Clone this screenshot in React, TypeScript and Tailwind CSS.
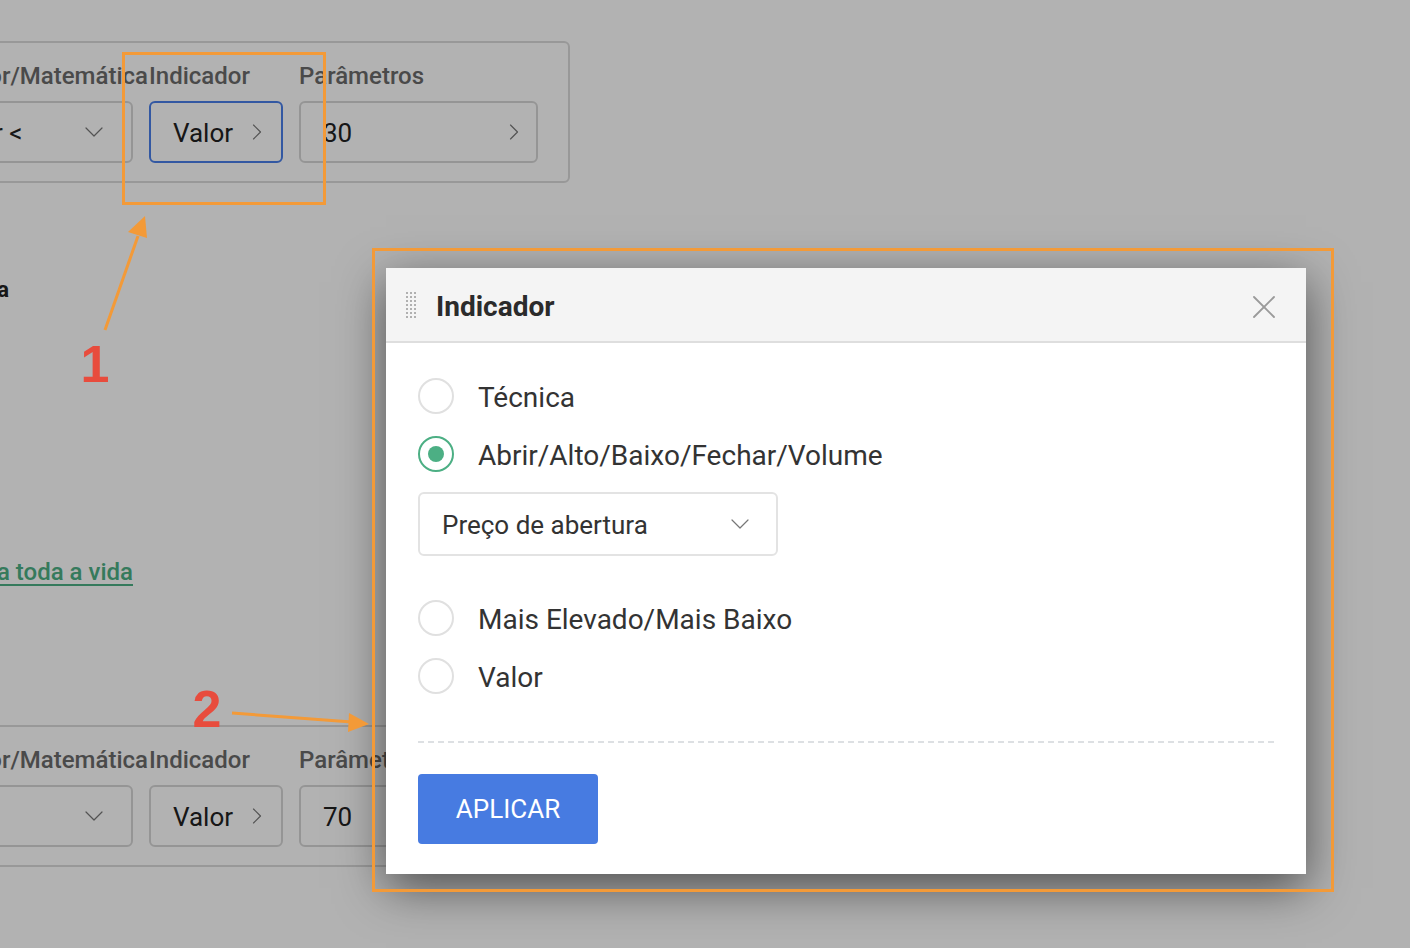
import { ChevronDown, ChevronRight, X } from "lucide-react";

type FieldProps = {
  text?: string;
  icon: "down" | "right";
  active?: boolean;
  pr: string;
};

function Field({ text, icon, active, pr }: FieldProps) {
  return (
    <div
      className={`h-[62px] rounded-md border-2 flex items-center justify-between pl-[22px] ${pr} ${
        active ? "border-[#4a7fe8]" : "border-[#d6d6d6]"
      }`}
    >
      <span className="text-[26px] text-[#222] whitespace-nowrap pt-[2px]">{text}</span>
      {icon === "down" ? (
        <ChevronDown size={32} strokeWidth={0.9} className="text-[#777]" />
      ) : (
        <ChevronRight size={28} strokeWidth={1} className="text-[#777]" />
      )}
    </div>
  );
}

function RulePanel({ op, param, active }: { op: string; param: string; active?: boolean }) {
  const label = "text-[24px] leading-[28px] font-medium text-[#6b6b6b] whitespace-nowrap";
  return (
    <div className="-ml-[114px] w-[684px] rounded-md border-2 border-[#dadada] pl-[24px] pr-[30px] pt-[19px] pb-[18px] flex gap-4">
      <div className="w-[221px] shrink-0">
        <div className="flex justify-end -mr-[15px] mb-[11px]">
          <span className={label}>Operador/Matemática</span>
        </div>
        <Field text={op} icon="down" pr="pr-[21px]" />
      </div>
      <div className="w-[134px] shrink-0">
        <div className={`${label} mb-[11px]`}>Indicador</div>
        <Field text="Valor" icon="right" active={active} pr="pr-[10px]" />
      </div>
      <div className="w-[239px] shrink-0">
        <div className={`${label} mb-[11px]`}>Parâmetros</div>
        <Field text={param} icon="right" pr="pr-[8px]" />
      </div>
    </div>
  );
}

function Radio({ label, checked }: { label: string; checked?: boolean }) {
  return (
    <div className="flex items-center gap-[24px] h-[36px]">
      <div
        className={`w-[36px] h-[36px] rounded-full border-2 flex items-center justify-center ${
          checked ? "border-[#4caf84]" : "border-[#e0e0e0]"
        }`}
      >
        {checked && <div className="w-[16px] h-[16px] rounded-full bg-[#4caf84]" />}
      </div>
      <span className="text-[28px] text-[#333] whitespace-nowrap pt-[3px]">{label}</span>
    </div>
  );
}

function DragHandle() {
  const dots = [];
  for (let r = 0; r < 7; r++) {
    for (let c = 0; c < 3; c++) {
      dots.push(<rect key={`${r}-${c}`} x={c * 4} y={r * 4} width="2" height="2" fill="#b0b0b0" />);
    }
  }
  return (
    <svg width="10" height="26" viewBox="0 0 10 26">
      {dots}
    </svg>
  );
}

export default function App() {
  return (
    <div
      className="relative w-[1410px] h-[948px] overflow-hidden bg-white"
      style={{ fontFamily: "Roboto, 'Liberation Sans', sans-serif" }}
    >
      {/* page under the dialog */}
      <div className="pt-[41px]">
        <RulePanel op="Maior <" param="30" active />

        <div className="mt-[92px] w-[9px] flex justify-end">
          <span className="text-[22px] leading-[30px] font-bold text-[#222] whitespace-nowrap">
            Duração da estratégia
          </span>
        </div>

        <div className="mt-[252px] w-[133px] flex justify-end">
          <span className="text-[24px] leading-[30px] font-medium text-[#4caf84] underline underline-offset-4 whitespace-nowrap">
            Válido para toda a vida
          </span>
        </div>

        <div className="mt-[138px]">
          <RulePanel op="" param="70" />
        </div>
      </div>

      {/* dim overlay */}
      <div className="absolute inset-0 bg-black/30" />

      {/* dialog */}
      <div className="absolute left-[386px] top-[268px] w-[920px] h-[606px] bg-white shadow-[0_14px_45px_rgba(0,0,0,0.55)] flex flex-col">
        <div className="h-[75px] shrink-0 bg-[#f4f4f4] border-b-2 border-[#dedede] flex items-center pl-[20px] pr-[22px]">
          <DragHandle />
          <h2 className="ml-[20px] pt-[4px] text-[28px] font-bold text-[#2b2b2b]">Indicador</h2>
          <X size={40} strokeWidth={1.1} className="ml-auto text-[#9a9a9a] mt-[4px]" />
        </div>

        <div className="px-[32px] pt-[35px] pb-[30px] flex flex-col">
          <Radio label="Técnica" />
          <div className="mt-[22px]">
            <Radio label="Abrir/Alto/Baixo/Fechar/Volume" checked />
          </div>
          <div className="mt-[20px] w-[360px] h-[64px] rounded-md border-2 border-[#e3e3e3] flex items-center justify-between pl-[22px] pr-[20px]">
            <span className="text-[26px] text-[#333] pt-[3px]">Preço de abertura</span>
            <ChevronDown size={32} strokeWidth={0.9} className="text-[#777]" />
          </div>
          <div className="mt-[44px]">
            <Radio label="Mais Elevado/Mais Baixo" />
          </div>
          <div className="mt-[22px]">
            <Radio label="Valor" />
          </div>
          <div className="mt-[47px] border-t-2 border-dashed border-[#dde0e3]" />
          <button className="mt-[31px] w-[180px] h-[70px] rounded-[4px] bg-[#477be1] text-white text-[26px] self-start">
            APLICAR
          </button>
        </div>
      </div>

      {/* annotations */}
      <svg className="absolute inset-0 pointer-events-none" width="1410" height="948" viewBox="0 0 1410 948">
        <rect x="123.5" y="53.5" width="201" height="150" fill="none" stroke="#f39a38" strokeWidth="3" />
        <rect x="373.5" y="249.5" width="959" height="641" fill="none" stroke="#f39a38" strokeWidth="3" />
        <line x1="105" y1="330" x2="138" y2="236" stroke="#f39a38" strokeWidth="3" />
        <polygon points="145,216 128,232 147,238" fill="#f39a38" />
        <line x1="232" y1="713" x2="352" y2="722" stroke="#f39a38" strokeWidth="3" />
        <polygon points="369,724 349,713 348,732" fill="#f39a38" />
        <text
          x="95"
          y="382"
          textAnchor="middle"
          fill="#e84c3d"
          fontSize="52"
          fontWeight="bold"
          fontFamily="'Liberation Sans', Arial, sans-serif"
        >
          1
        </text>
        <text
          x="207"
          y="727"
          textAnchor="middle"
          fill="#e84c3d"
          fontSize="52"
          fontWeight="bold"
          fontFamily="'Liberation Sans', Arial, sans-serif"
        >
          2
        </text>
      </svg>
    </div>
  );
}
